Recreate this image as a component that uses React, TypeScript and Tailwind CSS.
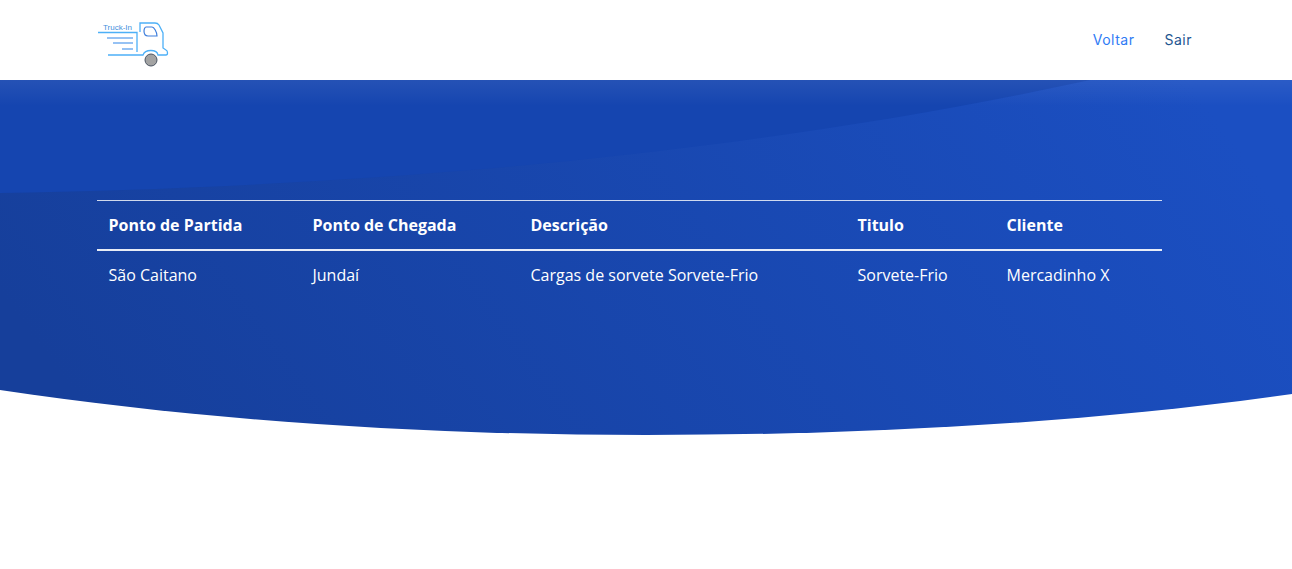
const columns = [
  { label: 'Ponto de Partida', value: 'São Caitano', width: 'w-[204px]' },
  { label: 'Ponto de Chegada', value: 'Jundaí', width: 'w-[218px]' },
  { label: 'Descrição', value: 'Cargas de sorvete Sorvete-Frio', width: 'w-[327px]' },
  { label: 'Titulo', value: 'Sorvete-Frio', width: 'w-[149px]' },
  { label: 'Cliente', value: 'Mercadinho X', width: 'w-[167px]' },
]

const Logo = () => (
  <svg width="72" height="60" viewBox="0 -10 72 60" fill="none" className="block">
    <text x="6" y="9.500" fontSize="8" fill="#3f8fdc" fontFamily="Liberation Sans, sans-serif">Truck-In</text>
    <path d="M1 12.500H40V32" stroke="#4db0f7" strokeWidth="1.3" />
    <path d="M10 18H36M16 23H36M25 29H36" stroke="#2f86ea" strokeWidth="1.1" />
    <path d="M11 35H46C48 29 60 29 61 35H69C71 35 71 31 69 30L66 28V13L62 5C61 3.500 60 3 58 3H43V12" stroke="#4db0f7" strokeWidth="1.3" />
    <path d="M49 7H55C57 7 60 12 60 16H51C48 16 47 14 47 11C47 9 48 7 49 7Z" stroke="#3f7fdc" strokeWidth="1.200" />
    <circle cx="54" cy="40" r="6" fill="#a3a3a3" stroke="#4b5563" strokeWidth="1" />
  </svg>
)

// curved panel behind the table
const HeroBackground = () => (
  <svg className="absolute inset-0 w-full h-full" viewBox="0 0 1292 355" preserveAspectRatio="none">
    <defs>
      <linearGradient id="base" x1="0" y1="0.6" x2="1" y2="0.4">
        <stop offset="0" stopColor="#163f9b" />
        <stop offset="1" stopColor="#1b4fc2" />
      </linearGradient>
      <linearGradient id="shine" x1="0" y1="0" x2="0" y2="1">
        <stop offset="0" stopColor="#ffffff" stopOpacity="0.07" />
        <stop offset="1" stopColor="#ffffff" stopOpacity="0" />
      </linearGradient>
    </defs>
    <path d="M0 0H1292V314C1080 344 860 355 646 355C420 355 200 340 0 310Z" fill="url(#base)" />
    <path d="M0 113V0H1090C700 85 300 108 0 113Z" fill="#1545b0" />
    <path d="M0 0H1292V26H0Z" fill="url(#shine)" />
  </svg>
)

export default function App() {
  return (
    <div className="min-h-[569px] bg-white font-['Open_Sans',sans-serif]">
      <header className="h-20 flex items-center justify-between pl-[97px] pr-[100px]">
        <Logo />
        <nav className="flex items-center gap-[30px] text-sm font-['Inter',sans-serif] tracking-[0.5px]">
          <a className="text-[#2f7bf5]">Voltar</a>
          <a className="text-[#1d5591]">Sair</a>
        </nav>
      </header>

      <section className="relative h-[355px] pt-[120px] pl-[96.5px]">
        <HeroBackground />
        <table className="relative w-[1065px] table-fixed border-collapse text-white text-base">
          <thead>
            <tr className="border-t border-b-2 border-t-white/80 border-b-white/90">
              {columns.map((col) => (
                <th key={col.label} className={`${col.width} p-3 text-left font-bold`}>
                  {col.label}
                </th>
              ))}
            </tr>
          </thead>
          <tbody>
            <tr>
              {columns.map((col) => (
                <td key={col.label} className="p-3">
                  {col.value}
                </td>
              ))}
            </tr>
          </tbody>
        </table>
      </section>
    </div>
  )
}
